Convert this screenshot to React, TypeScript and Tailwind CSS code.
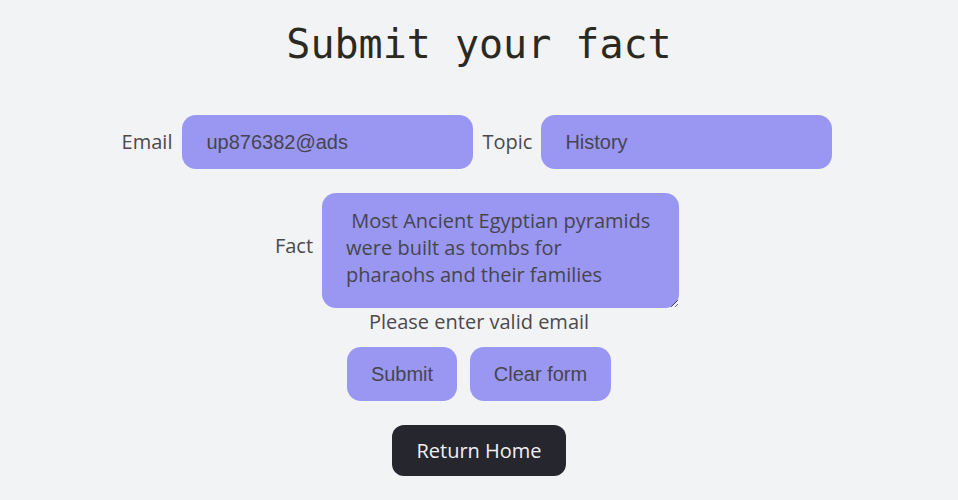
import React, { useState } from 'react';

const sans = "font-['Open_Sans','Noto_Sans',sans-serif]";
const arial = "font-['Liberation_Sans',Arial,sans-serif]";

const App: React.FC = () => {
  const [email, setEmail] = useState('up876382@ads');
  const [topic, setTopic] = useState('History');
  const [fact, setFact] = useState(' Most Ancient Egyptian pyramids were built as tombs for pharaohs and their families');

  const clearForm = () => {
    setEmail('');
    setTopic('');
    setFact('');
  };

  return (
    <div className="min-h-[500px] w-full bg-[#f2f3f5] flex flex-col items-center">
      {/* Title */}
      <h1 className="mt-[20px] font-['DejaVu_Sans_Mono','Liberation_Mono',monospace] text-[40px] leading-[48px] text-[#2b2a22]">
        Submit your fact
      </h1>

      {/* Email + Topic */}
      <div className={`mt-[47px] pr-[4px] flex items-center ${sans} text-[20px] text-[#4a4a4a]`}>
        <label className="mr-[10px]">Email</label>
        <input
          value={email}
          onChange={(e) => setEmail(e.target.value)}
          className={`w-[291px] h-[54px] rounded-[14px] bg-[#9a97f2] pl-[24px] ${arial} text-[20px] text-[#46454f] outline-none`}
        />
        <label className="ml-[9px] mr-[9px]">Topic</label>
        <input
          value={topic}
          onChange={(e) => setTopic(e.target.value)}
          className={`w-[291px] h-[54px] rounded-[14px] bg-[#9a97f2] pl-[24px] ${arial} text-[20px] text-[#46454f] outline-none`}
        />
      </div>

      {/* Fact */}
      <div className={`mt-[24px] pr-[4px] flex items-center ${sans} text-[20px] text-[#4a4a4a]`}>
        <label className="mr-[9px] mb-[10px]">Fact</label>
        <textarea
          value={fact}
          onChange={(e) => setFact(e.target.value)}
          className={`w-[357px] h-[115px] rounded-[14px] bg-[#9a97f2] pl-[24px] pr-[26px] pt-[14px] ${sans} text-[20px] leading-[27px] text-[#46454f] outline-none`}
        />
      </div>

      <p className={`${sans} text-[20px] leading-[27px] text-[#4a4a4a]`}>Please enter valid email</p>

      {/* Actions */}
      <div className={`mt-[12px] flex gap-[13px] ${arial} text-[20px] text-[#46454f]`}>
        <button className="w-[110px] h-[54px] rounded-[14px] bg-[#9a97f2]">Submit</button>
        <button onClick={clearForm} className="w-[141px] h-[54px] rounded-[14px] bg-[#9a97f2]">
          Clear form
        </button>
      </div>

      <button className={`mt-[24px] w-[174px] h-[51px] rounded-[12px] bg-[#26262e] ${sans} text-[20px] text-[#f0f0f2]`}>
        Return Home
      </button>
    </div>
  );
};

export default App;
